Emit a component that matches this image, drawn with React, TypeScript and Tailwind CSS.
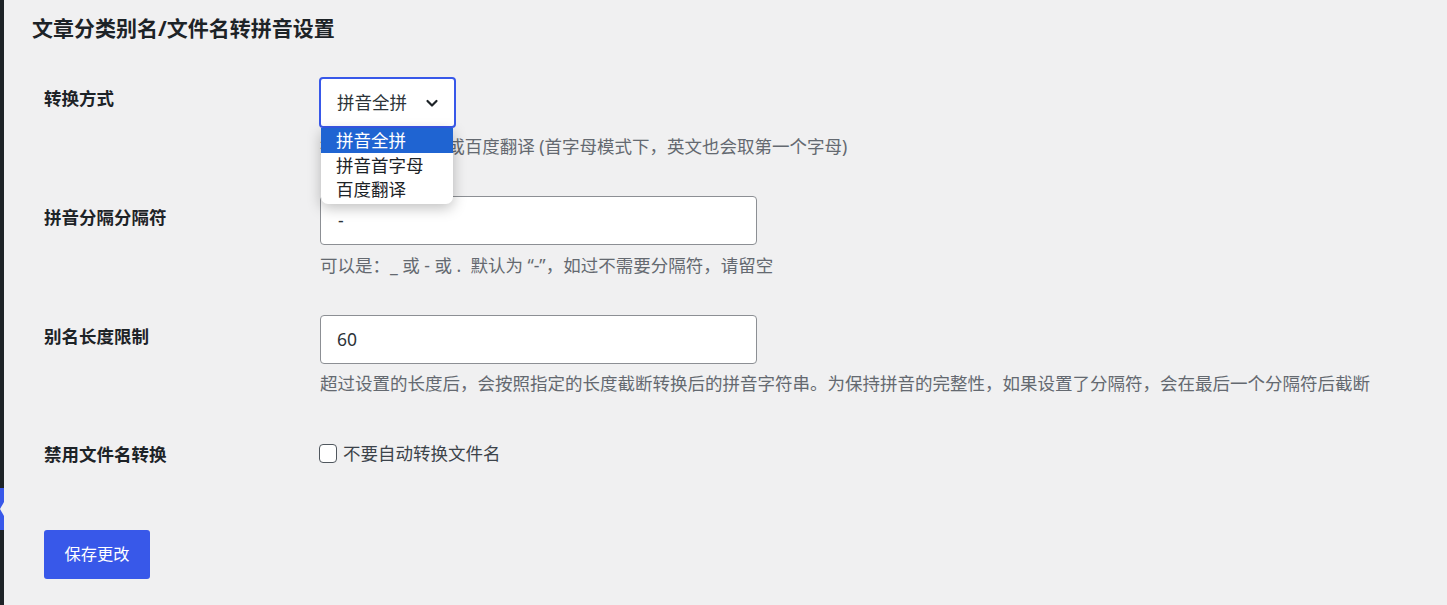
import React from 'react';

const Row: React.FC<{ label: string; labelPad?: string; children: React.ReactNode }> = ({
  label,
  labelPad = 'pt-[9px]',
  children,
}) => (
  <div className="grid grid-cols-[276px_1fr] py-[19px]">
    <div className={`${labelPad} text-[17.5px] leading-[24px] font-semibold text-[#1d2327]`}>
      {label}
    </div>
    <div>{children}</div>
  </div>
);

const App: React.FC = () => {
  const options = ['拼音全拼', '拼音首字母', '百度翻译'];

  return (
    <div className="flex h-[605px] overflow-hidden bg-[#f0f0f1] font-['Noto_Sans','Noto_Sans_CJK_SC',sans-serif] text-[#3c434a]">
      {/* admin menu edge */}
      <div className="flex w-[4px] flex-col overflow-hidden bg-[#1d2327]">
        <div className="h-[488px] shrink-0" />
        <div className="relative h-[42px] shrink-0 bg-[#3858e9]">
          <span className="absolute right-0 top-1/2 -translate-y-1/2 border-y-[7px] border-r-[4px] border-y-transparent border-r-[#f0f0f1]" />
        </div>
      </div>

      <div className="flex-1 pl-[28px] pt-[14px]">
        <h2 className="text-[21px] leading-[28px] font-bold text-[#1d2327]">
          文章分类别名/文件名转拼音设置
        </h2>

        <div className="mt-[16px] pl-[12px]">
          <Row label="转换方式">
            <div className="relative">
              <div className="flex h-[51px] w-[137px] -ml-[1px] items-center justify-between rounded-[4px] border-2 border-[#3858e9] bg-white pl-[16px] pr-[15px] text-[17.5px] text-[#2c3338]">
                <span>拼音全拼</span>
                <svg width="14" height="14" viewBox="0 0 14 14" fill="none">
                  <path d="M2.5 5l4.5 4.5L11.5 5" stroke="#1d2327" strokeWidth="2.2" strokeLinecap="round" strokeLinejoin="round" />
                </svg>
              </div>
              <p className="mt-[6px] text-[17.5px] leading-[24px] text-[#646970]">
                拼音全拼,首字母或百度翻译 (首字母模式下，英文也会取第一个字母)
              </p>
              <ul className="absolute left-[1px] top-[51px] z-10 w-[132px] overflow-hidden rounded-b-[7px] bg-white pb-[2px] text-[17.5px] leading-[24.5px] text-[#1d2327] shadow-[0_4px_14px_rgba(0,0,0,0.25)]">
                {options.map((o, i) => (
                  <li
                    key={o}
                    className={`pl-[15px] ${i === 0 ? 'bg-[#1f64d2] text-white' : ''}`}
                  >
                    {o}
                  </li>
                ))}
              </ul>
            </div>
          </Row>

          <Row label="拼音分隔分隔符">
            <div className="flex h-[49px] w-[437px] items-center rounded-[4px] border border-[#8c8f94] bg-white px-[17px] text-[17.5px] text-[#2c3338]">
              -
            </div>
            <p className="mt-[8px] text-[17.5px] leading-[24px] text-[#646970]">
              可以是：_ 或 - 或 .&nbsp; 默认为 “-”，如过不需要分隔符，请留空
            </p>
          </Row>

          <Row label="别名长度限制">
            <div className="flex h-[49px] w-[437px] items-center rounded-[4px] border border-[#8c8f94] bg-white px-[16px] text-[17.5px] text-[#2c3338]">
              60
            </div>
            <p className="mt-[7px] text-[17.5px] leading-[24px] text-[#646970]">
              超过设置的长度后，会按照指定的长度截断转换后的拼音字符串。为保持拼音的完整性，如果设置了分隔符，会在最后一个分隔符后截断
            </p>
          </Row>

          <Row label="禁用文件名转换">
            <label className="-ml-[1px] flex items-center gap-[6px] pt-[8px] text-[17.5px] leading-[24px] text-[#3c434a]">
              <span className="h-[19px] w-[18px] rounded-[4px] border border-[#50575e] bg-white" />
              不要自动转换文件名
            </label>
          </Row>
        </div>

        <button
          type="button"
          className="ml-[12px] mt-[45px] h-[49px] w-[106px] rounded-[3px] bg-[#3858e9] text-[16.25px] text-white"
        >
          保存更改
        </button>
      </div>
    </div>
  );
};

export default App;
